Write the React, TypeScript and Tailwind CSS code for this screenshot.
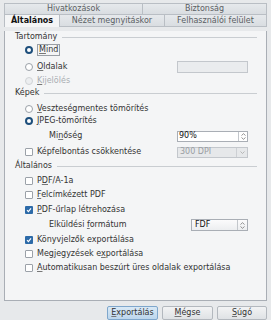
import React from "react";

function U({ children }: { children: React.ReactNode }) {
  return <span className="underline decoration-[#777] underline-offset-1">{children}</span>;
}

function Radio({ checked, disabled }: { checked?: boolean; disabled?: boolean }) {
  if (checked) {
    return (
      <span className="box-border h-[8px] w-[8px] shrink-0 rounded-full border-[2px] border-[#1e4f7c] bg-white" />
    );
  }
  return (
    <span
      className={`box-border h-[8px] w-[8px] shrink-0 rounded-full border ${
        disabled ? "border-[#d0d3d6] bg-[#eceef0]" : "border-[#9ba1a8] bg-white"
      }`}
    />
  );
}

function Check({ checked }: { checked?: boolean }) {
  if (checked) {
    return (
      <span className="flex h-[8px] w-[8px] shrink-0 items-center justify-center rounded-[1px] bg-[#2c6aa8]">
        <svg width="6" height="6" viewBox="0 0 6 6">
          <path d="M1 3.2 L2.4 4.6 L5 1.4" fill="none" stroke="white" strokeWidth="1.2" />
        </svg>
      </span>
    );
  }
  return (
    <span className="box-border h-[8px] w-[8px] shrink-0 rounded-[1px] border border-[#9ba1a8] bg-white" />
  );
}

function Heading({ label, mt }: { label: string; mt: string }) {
  return (
    <div className={`flex h-[12px] items-center pl-[10px] pr-[9px] ${mt}`}>
      <span>{label}</span>
      <span className="ml-[5px] h-px flex-1 bg-[#c9cdd1]" />
    </div>
  );
}

function Spin() {
  return (
    <svg width="5" height="7" viewBox="0 0 5 7">
      <path d="M0.5 2.5 L2.5 0.7 L4.5 2.5 M0.5 4.5 L2.5 6.3 L4.5 4.5" fill="none" stroke="#777" strokeWidth="0.8" />
    </svg>
  );
}

export default function App() {
  return (
    <div
      className="h-[320px] w-[271px] overflow-hidden bg-[#e7e9eb] text-[8px] leading-none text-[#333]"
      style={{ fontFamily: '"DejaVu Sans", sans-serif' }}
    >
      {/* Tabs */}
      <div className="px-[4px] pt-[3px]">
        <div className="flex h-[11px] text-[#5a5e63]">
          <div className="flex w-[139px] items-center justify-center border border-b-0 border-[#b9bec4] bg-gradient-to-b from-[#e6e9ec] to-[#d9dde1]">
            Hivatkozások
          </div>
          <div className="flex flex-1 items-center justify-center border border-b-0 border-l-0 border-[#b9bec4] bg-gradient-to-b from-[#e6e9ec] to-[#d9dde1]">
            Biztonság
          </div>
        </div>
        <div className="flex h-[13px] text-[#5a5e63]">
          <div className="flex w-[56px] items-center justify-center border border-b-0 border-[#b9bec4] bg-[#f4f5f6] font-bold text-[#111]">
            Általános
          </div>
          <div className="flex w-[105px] items-center justify-center border-t border-r border-b border-[#b9bec4] bg-gradient-to-b from-[#e6e9ec] to-[#d9dde1]">
            Nézet megnyitáskor
          </div>
          <div className="flex flex-1 items-center justify-center border-t border-r border-b border-[#b9bec4] bg-gradient-to-b from-[#e6e9ec] to-[#d9dde1]">
            Felhasználói felület
          </div>
        </div>
      </div>

      {/* Panel */}
      <div className="mx-[4px] box-border h-[270px] border border-t-0 border-[#a9aeb5] bg-[#f4f5f6]">
        <Heading label="Tartomány" mt="mt-[4px]" />

        <div className="mt-[1px] flex h-[12px] items-center gap-[4px] pl-[20px]">
          <Radio checked />
          <span className="border border-[#9a9fa5] px-[1px] py-[1px]">
            <U>M</U>ind
          </span>
        </div>

        <div className="mt-[5px] flex h-[12px] items-center gap-[4px] pl-[20px] pr-[18px]">
          <Radio />
          <span className="flex-1">
            <U>O</U>ldalak
          </span>
          <span className="box-border h-[12px] w-[71px] border border-[#c3c7cc] bg-[#eaecee]" />
        </div>

        <div className="mt-[2px] flex h-[12px] items-center gap-[4px] pl-[20px] text-[#a9adb2]">
          <Radio disabled />
          <span>
            <U>K</U>ijelölés
          </span>
        </div>

        <Heading label="Képek" mt="mt-0" />

        <div className="mt-[4px] flex h-[12px] items-center gap-[4px] pl-[20px]">
          <Radio />
          <span>
            <U>V</U>eszteségmentes tömörítés
          </span>
        </div>

        <div className="mt-0 flex h-[12px] items-center gap-[4px] pl-[20px]">
          <Radio checked />
          <span>
            <U>J</U>PEG-tömörítés
          </span>
        </div>

        <div className="mt-[3px] flex h-[12px] items-center pl-[44px] pr-[18px]">
          <span className="flex-1">
            Mi<U>n</U>őség
          </span>
          <div className="box-border flex h-[11px] w-[71px] items-center border border-[#a9aeb5] bg-white">
            <span className="flex-1 pl-[1px] text-[#111]">90%</span>
            <span className="flex h-full w-[9px] items-center justify-center border-l border-[#c3c7cc]">
              <Spin />
            </span>
          </div>
        </div>

        <div className="mt-[4px] flex h-[12px] items-center gap-[4px] pl-[20px] pr-[18px]">
          <Check />
          <span className="flex-1">Képfelbontás csökkentése</span>
          <div className="box-border flex h-[11px] w-[71px] items-center border border-[#c3c7cc] bg-[#e6e8ea] text-[#9a9ea3]">
            <span className="flex-1 pl-[2px]">300 DPI</span>
            <span className="flex h-full w-[11px] items-center justify-center border-l border-[#cdd0d4]">
              <svg width="5" height="3" viewBox="0 0 5 3">
                <path d="M0.5 0.5 L2.5 2.5 L4.5 0.5" fill="none" stroke="#aaa" strokeWidth="0.8" />
              </svg>
            </span>
          </div>
        </div>

        <Heading label="Általános" mt="mt-[2px]" />

        <div className="mt-[3px] flex h-[12px] items-center gap-[4px] pl-[20px]">
          <Check />
          <span>
            P<U>D</U>F/A-1a
          </span>
        </div>

        <div className="mt-[2px] flex h-[12px] items-center gap-[4px] pl-[20px]">
          <Check />
          <span>
            <U>F</U>elcímkézett PDF
          </span>
        </div>

        <div className="mt-[3px] flex h-[12px] items-center gap-[4px] pl-[20px]">
          <Check checked />
          <span>
            <U>P</U>DF-űrlap létrehozása
          </span>
        </div>

        <div className="mt-[3px] flex h-[12px] items-center pl-[44px] pr-[18px]">
          <span className="flex-1">
            Elküldési <U>f</U>ormátum
          </span>
          <div className="box-border flex h-[12px] w-[57px] items-center border border-[#a9aeb5] bg-gradient-to-b from-[#fbfbfc] to-[#eceef0]">
            <span className="flex-1 pl-[3px] text-[#111]">FDF</span>
            <span className="flex h-full w-[10px] items-center justify-center border-l border-[#c3c7cc]">
              <Spin />
            </span>
          </div>
        </div>

        <div className="mt-[3px] flex h-[12px] items-center gap-[4px] pl-[20px]">
          <Check checked />
          <span>Könyvjelzők exportálása</span>
        </div>

        <div className="mt-[2px] flex h-[12px] items-center gap-[4px] pl-[20px]">
          <Check />
          <span>
            Megjegyzések e<U>x</U>portálása
          </span>
        </div>

        <div className="mt-[2px] flex h-[12px] items-center gap-[4px] pl-[20px]">
          <Check />
          <span>
            <U>A</U>utomatikusan beszúrt üres oldalak exportálása
          </span>
        </div>
      </div>

      {/* Buttons */}
      <div className="mt-[5px] flex justify-end gap-[4px] pr-[4px]">
        <button className="box-border flex h-[14px] w-[51px] items-center justify-center rounded-[2px] border border-[#7fa7cc] bg-gradient-to-b from-[#d9e9f6] to-[#bcd6ec] text-[#333]">
          <U>E</U>xportálás
        </button>
        <button className="box-border flex h-[14px] w-[51px] items-center justify-center rounded-[2px] border border-[#b3b8be] bg-gradient-to-b from-[#f2f3f4] to-[#dfe2e5] text-[#333]">
          <U>M</U>égse
        </button>
        <button className="box-border flex h-[14px] w-[50px] items-center justify-center rounded-[2px] border border-[#b3b8be] bg-gradient-to-b from-[#f2f3f4] to-[#dfe2e5] text-[#333]">
          <U>S</U>úgó
        </button>
      </div>
    </div>
  );
}
